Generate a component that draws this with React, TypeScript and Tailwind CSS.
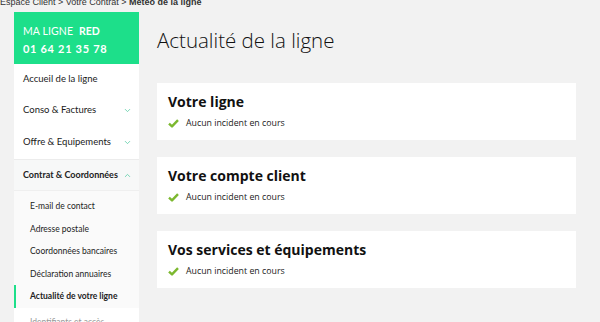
import { ChevronDown, ChevronUp } from "lucide-react";

const sub = [
  "E-mail de contact",
  "Adresse postale",
  "Coordonnées bancaires",
  "Déclaration annuaires",
  "Actualité de votre ligne",
];

const cards = ["Votre ligne", "Votre compte client", "Vos services et équipements"];

const Check = () => (
  <svg width="11" height="9" viewBox="0 0 11 9" className="shrink-0">
    <path d="M1 4.6 L4 7.4 L10 1.2" fill="none" stroke="#7cb82f" strokeWidth="2.4" strokeLinejoin="round" />
  </svg>
);

const App = () => {
  return (
    <div className="w-[600px] h-[322px] overflow-hidden bg-[#f2f2f2] font-['Lato',sans-serif] text-[#222]">
      {/* fil d'ariane */}
      <div className="h-[12px] overflow-hidden">
        <div className="-mt-[4px] text-[9px] leading-[12px] text-[#333] font-['Liberation_Sans',sans-serif]">
          Espace Client &gt; Votre Contrat &gt; <span className="font-bold">Météo de la ligne</span>
        </div>
      </div>

      <div className="flex pl-[14px]">
        {/* menu */}
        <aside className="w-[125px] shrink-0 bg-white">
          <div className="h-[52px] bg-[#1ddf8a] px-[9px] pt-[12px] text-white">
            <div className="text-[10.5px] leading-[14px] tracking-[0.1px]">
              MA LIGNE <span className="ml-[3px] font-bold">RED</span>
            </div>
            <div className="mt-[4px] text-[11px] leading-[14px] font-bold tracking-[0.7px]">01 64 21 35 78</div>
          </div>
          <div className="h-[31px] flex items-center pl-[9px] pr-[7px] text-[9.5px] text-[#1a1a1a]">Accueil de la ligne</div>
          <div className="h-[31px] flex items-center justify-between pl-[9px] pr-[7px] text-[9.5px] text-[#1a1a1a]">
            Conso &amp; Factures
            <ChevronDown size={9} strokeWidth={2.2} className="text-[#5fcfa9]" />
          </div>
          <div className="h-[33px] flex items-center justify-between pl-[9px] pr-[7px] text-[9.5px] text-[#1a1a1a]">
            Offre &amp; Equipements
            <ChevronDown size={9} strokeWidth={2.2} className="text-[#5fcfa9]" />
          </div>
          <div className="h-[31px] flex items-center justify-between pl-[9px] pr-[7px] text-[9px] font-bold whitespace-nowrap bg-[#f7f8f8] border-t border-[#ececec]">
            Contrat &amp; Coordonnées
            <ChevronUp size={9} strokeWidth={2.2} className="text-[#5fcfa9]" />
          </div>
          <div className="bg-[#fafafa] pt-[4px] border-t border-[#efefef]">
            {sub.map((s, i) => (
              <div
                key={s}
                className={
                  i === sub.length - 1
                    ? "h-[22.6px] flex items-center pl-[14px] text-[8.5px] font-bold border-l-[2px] border-[#1ddf8a]"
                    : "h-[22.6px] flex items-center pl-[16px] text-[8.5px]"
                }
              >
                {s}
              </div>
            ))}
          </div>
          <div className="h-[30px] px-[16px] pt-[8px] text-[8.5px] text-[#999]">Identifiants et accès</div>
        </aside>

        {/* contenu */}
        <main className="ml-[18px] w-[419px]">
          <h1 className="mt-[14px] h-[38px] text-[20.5px] font-light font-['Open_Sans',sans-serif] text-[#111] leading-[28px]">
            Actualité de la ligne
          </h1>
          <div className="mt-[19px] flex flex-col gap-[17px]">
            {cards.map((c) => (
              <section key={c} className="h-[57px] bg-white px-[11px] pt-[10px] font-['Open_Sans',sans-serif]">
                <h2 className="text-[14px] font-bold leading-[18px] text-[#111]">{c}</h2>
                <div className="mt-[6px] flex items-center gap-[7px] text-[8.8px] text-[#222]">
                  <Check />
                  Aucun incident en cours
                </div>
              </section>
            ))}
          </div>
        </main>
      </div>
    </div>
  );
};

export default App;
